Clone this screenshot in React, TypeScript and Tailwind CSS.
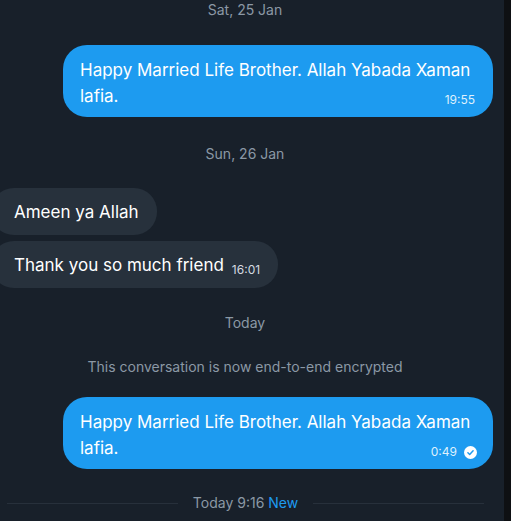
import { Fragment } from 'react';

function DateLabel({ children, className = '' }: { children: React.ReactNode; className?: string }) {
  return (
    <div className={`flex justify-center pr-[14px] text-[14px] leading-5 text-[#8b98a5] ${className}`}>
      {children}
    </div>
  );
}

function SentBubble({ text, time, read }: { text: string; time: string; read?: boolean }) {
  return (
    <div className="flex justify-end pr-[11px]">
      <div className="w-[430px] rounded-[24px] bg-[#1d9bf0] pl-[17px] pr-[16px] pt-[12px] pb-[8px] text-white">
        <p className="text-[17px] leading-[26px]">
          {text}
          <span className="float-right mt-[9px] flex items-center gap-[7px] text-[12px] leading-4 text-[#dff0fd]">
            <span className={read ? '' : 'pr-[2px]'}>{time}</span>
            {read && (
              <svg width="13" height="13" viewBox="0 0 16 16">
                <circle cx="8" cy="8" r="8" fill="white" />
                <polyline points="4.8 8.3 7 10.4 11.2 5.8" fill="none" stroke="#1d9bf0" strokeWidth="1.8" strokeLinecap="round" strokeLinejoin="round" />
              </svg>
            )}
          </span>
        </p>
      </div>
    </div>
  );
}

function ReceivedBubble({ text, time }: { text: string; time?: string }) {
  return (
    <div className="flex">
      <div className="-ml-[9px] flex h-[47px] items-center rounded-[23px] bg-[#27313c] pl-[23px] pr-[18px] text-white">
        <span className="text-[17px] leading-[26px]">{text}</span>
        {time && <span className="ml-[8px] mt-[10px] text-[12px] leading-4 text-[#d5dbe1]">{time}</span>}
      </div>
    </div>
  );
}

export default function App() {
  return (
    <div className="flex h-[521px] w-[511px] overflow-hidden bg-[#18202a] font-['Inter',sans-serif]">
      <div className="flex min-w-0 flex-1 flex-col">
        <DateLabel>Sat, 25 Jan</DateLabel>
        <div className="mt-[25px]">
          <SentBubble text="Happy Married Life Brother. Allah Yabada Xaman lafia." time="19:55" />
        </div>
        <DateLabel className="mt-[27px]">Sun, 26 Jan</DateLabel>
        <div className="mt-[24px] flex flex-col gap-[6px]">
          <ReceivedBubble text="Ameen ya Allah" />
          <ReceivedBubble text="Thank you so much friend" time="16:01" />
        </div>
        <DateLabel className="mt-[25px]">Today</DateLabel>
        <DateLabel className="mt-[24px]">This conversation is now end-to-end encrypted</DateLabel>
        <div className="mt-[20px]">
          <SentBubble text="Happy Married Life Brother. Allah Yabada Xaman lafia." time="0:49" read />
        </div>
        <div className="mt-[24px] flex items-center gap-[15px] pl-[7px] pr-[20px]">
          <div className="h-px flex-1 bg-[#27303b]" />
          <span className="text-[14px] leading-5 text-[#8b98a5]">
            Today 9:16 <span className="text-[#1d9bf0]">New</span>
          </span>
          <div className="h-px flex-1 bg-[#27303b]" />
        </div>
      </div>
      <div className="w-[7px] shrink-0 bg-[#0e1013]" />
    </div>
  );
}
